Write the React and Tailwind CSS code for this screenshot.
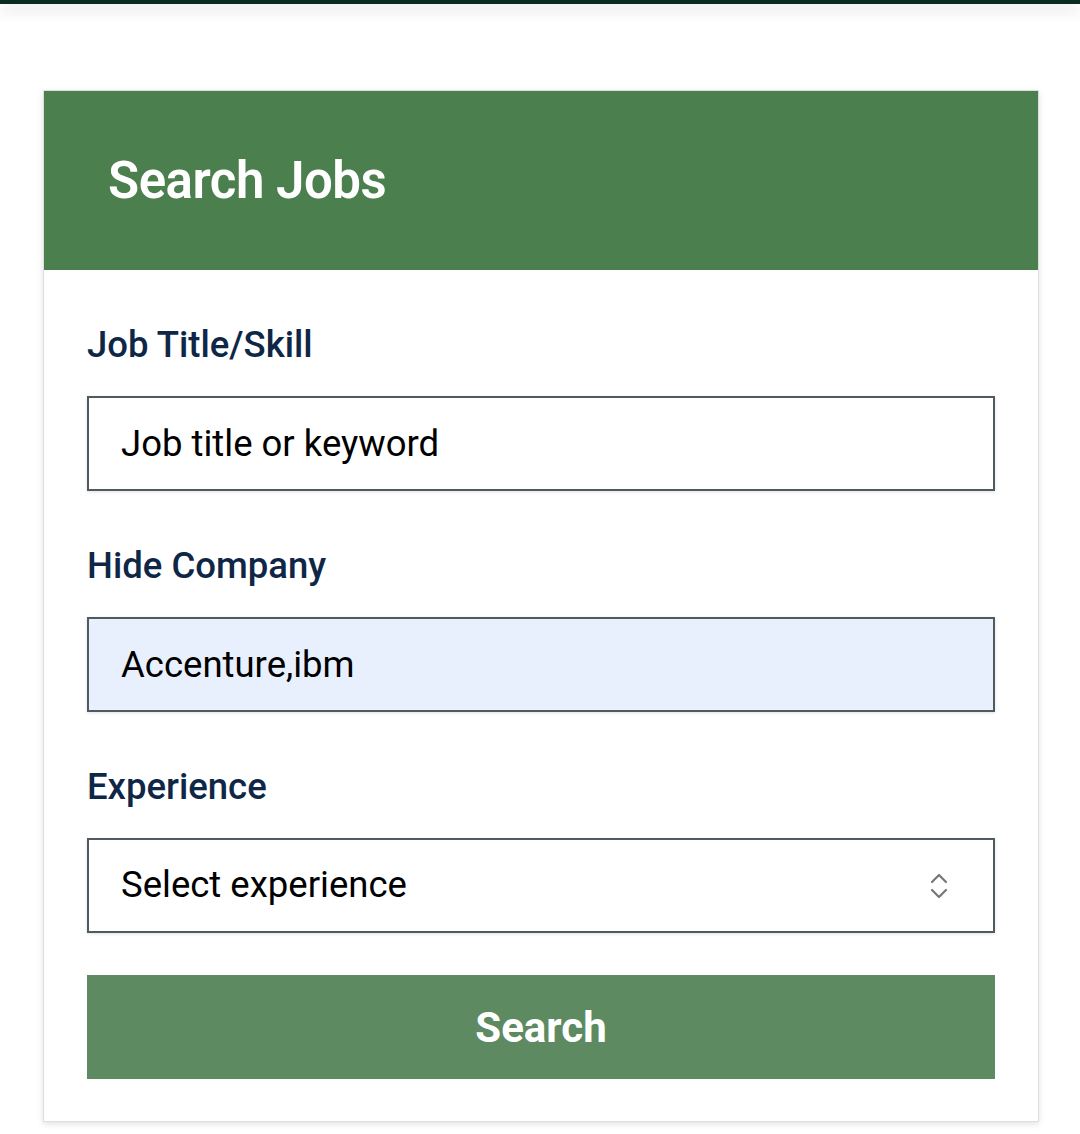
import React from 'react';

const fieldClass =
  'block w-full h-[95px] border-2 border-[#4f5b5e] px-[32px] text-[36.5px] text-black outline-none shadow-[0_1px_3px_rgba(0,0,0,0.12)]';

const labelClass = 'block text-[36.5px] leading-[51px] font-medium text-[#0f2747] mb-[26px]';

const App = () => {
  return (
    <div className="min-h-[1134px] bg-white" style={{ fontFamily: 'Roboto, "Liberation Sans", sans-serif' }}>
      {/* Top bar */}
      <div className="h-[4px] bg-[#0b2b1e] shadow-[0_6px_14px_rgba(0,0,0,0.18)]" />

      <div className="pl-[43px] pr-[41px] pt-[86px]">
        <div className="border border-[#dedede] bg-white shadow-[0_2px_6px_rgba(0,0,0,0.12)]">
          {/* Header */}
          <div className="h-[179px] bg-[#4b7f4e] px-[64px] flex items-center">
            <h1 className="text-[51px] font-semibold text-white tracking-[-0.5px] leading-none">Search Jobs</h1>
          </div>

          {/* Form */}
          <form className="px-[43px] pt-[49px] pb-[42px]" onSubmit={(e) => e.preventDefault()}>
            <div className="mb-[49px]">
              <label className={labelClass}>Job Title/Skill</label>
              <input type="text" placeholder="Job title or keyword" className={`${fieldClass} bg-white placeholder:text-black`} />
            </div>

            <div className="mb-[49px]">
              <label className={labelClass}>Hide Company</label>
              <input type="text" defaultValue="Accenture,ibm" className={`${fieldClass} bg-[#e8f0fe]`} />
            </div>

            <div className="mb-[42px]">
              <label className={labelClass}>Experience</label>
              <div className={`${fieldClass} bg-white flex items-center justify-between pr-[45px]`}>
                <span>Select experience</span>
                <svg width="18" height="26" viewBox="0 0 18 26" fill="none" stroke="#777" strokeWidth="2.2" strokeLinecap="round" strokeLinejoin="round">
                  <path d="M2 9 L9 2 L16 9" />
                  <path d="M2 17 L9 24 L16 17" />
                </svg>
              </div>
            </div>

            <button type="submit" className="block w-full h-[104px] bg-[#5d8a60] text-white text-[42px] font-bold">
              Search
            </button>
          </form>
        </div>
      </div>
    </div>
  );
};

export default App;
